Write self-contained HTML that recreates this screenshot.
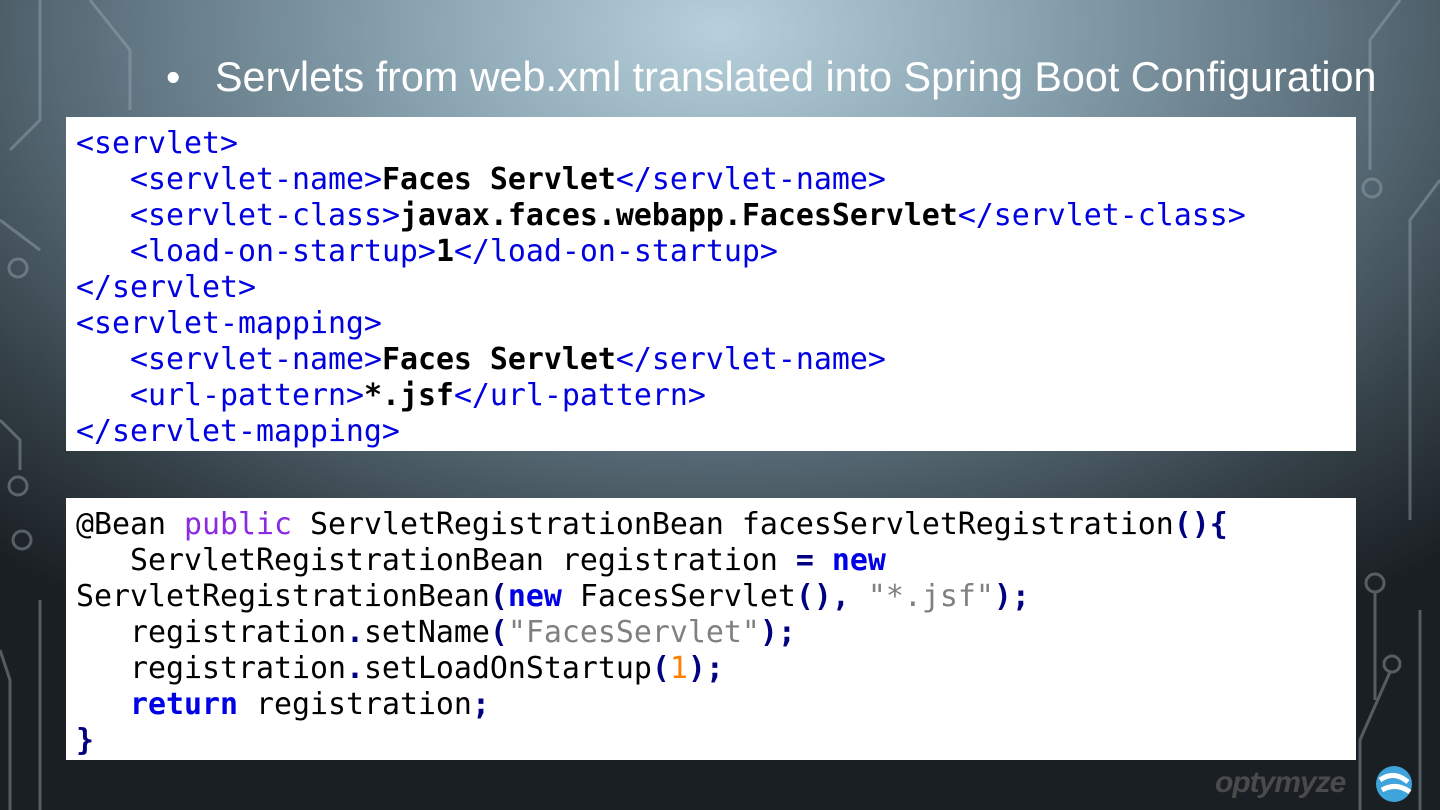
<!DOCTYPE html>
<html><head><meta charset="utf-8"><style>
html,body{margin:0;padding:0}
body{width:1440px;height:810px;overflow:hidden;position:relative;
background:radial-gradient(ellipse 1100px 700px at 720px 30px,#b7d0dc 0%,#8ea8b5 25%,#5f7480 55%,#323d44 82%,#1a1f23 100%);
font-family:"Liberation Sans",sans-serif}
.t{position:absolute;left:215px;top:54px;font-size:41.3px;color:#fff;white-space:nowrap}
.b{position:absolute;left:166px;top:54px;font-size:41px;color:#fff}
.box{position:absolute;left:66px;width:1290px;background:#fff;box-sizing:border-box;padding:9px 0 0 10px;
font-family:"DejaVu Sans Mono","Liberation Mono",monospace;font-size:29.9px;line-height:36px;white-space:pre;color:#000}
.k{color:#0000e0}.bd{font-weight:bold}
.p{color:#8a2be2}.o{color:#000080;font-weight:bold}.n{color:#0000e6;font-weight:bold}.s{color:#808080}.num{color:#ff8000}
.logo{position:absolute;left:1215px;top:766px;font-size:30px;font-weight:bold;font-style:italic;color:#4a4a4a;letter-spacing:-1px}
</style></head><body>
<svg width="1440" height="810" style="position:absolute;left:0;top:0" fill="none" stroke="#9aa9b2" stroke-width="3" opacity="0.45">
<path d="M90 0 L130 50 L130 110"/><path d="M40 0 L40 120 L10 150"/><path d="M0 220 L40 250"/><circle cx="18" cy="268" r="9"/>
<path d="M0 420 L20 440 L20 470"/><circle cx="18" cy="486" r="9"/><circle cx="22" cy="540" r="9"/>
<path d="M0 650 L10 680 L10 810"/><path d="M40 600 L40 810"/><path d="M1400 0 L1370 40 L1370 170"/><circle cx="1372" cy="188" r="9"/>
<path d="M1440 180 L1410 220 L1410 520"/><circle cx="1375" cy="583" r="9"/><path d="M1375 592 L1375 700"/>
<circle cx="1392" cy="664" r="8"/><path d="M1390 672 L1360 740 L1360 810"/><path d="M1420 610 L1420 810"/>
</svg>
<div class="b">•</div>
<div class="t">Servlets from web.xml translated into Spring Boot Configuration</div>
<div class="box" style="top:117px;height:334px"><span class="k">&lt;servlet&gt;</span>
   <span class="k">&lt;servlet-name&gt;</span><span class="bd">Faces Servlet</span><span class="k">&lt;/servlet-name&gt;</span>
   <span class="k">&lt;servlet-class&gt;</span><span class="bd">javax.faces.webapp.FacesServlet</span><span class="k">&lt;/servlet-class&gt;</span>
   <span class="k">&lt;load-on-startup&gt;</span><span class="bd">1</span><span class="k">&lt;/load-on-startup&gt;</span>
<span class="k">&lt;/servlet&gt;</span>
<span class="k">&lt;servlet-mapping&gt;</span>
   <span class="k">&lt;servlet-name&gt;</span><span class="bd">Faces Servlet</span><span class="k">&lt;/servlet-name&gt;</span>
   <span class="k">&lt;url-pattern&gt;</span><span class="bd">*.jsf</span><span class="k">&lt;/url-pattern&gt;</span>
<span class="k">&lt;/servlet-mapping&gt;</span></div>
<div class="box" style="top:498px;height:262px">@Bean <span class="p">public</span> ServletRegistrationBean facesServletRegistration<span class="o">(){</span>
   ServletRegistrationBean registration <span class="o">=</span> <span class="n">new</span>
ServletRegistrationBean<span class="o">(</span><span class="n">new</span> FacesServlet<span class="o">(),</span> <span class="s">"*.jsf"</span><span class="o">);</span>
   registration<span class="o">.</span>setName<span class="o">(</span><span class="s">"FacesServlet"</span><span class="o">);</span>
   registration<span class="o">.</span>setLoadOnStartup<span class="o">(</span><span class="num">1</span><span class="o">);</span>
   <span class="n">return</span> registration<span class="o">;</span>
<span class="o">}</span></div>
<div class="logo">optymyze</div>
<svg width="44" height="44" style="position:absolute;left:1374px;top:762px"><circle cx="20" cy="22" r="18" fill="#3fa3dc"/><path d="M6 18 Q20 8 34 20 M8 28 Q22 20 36 30" stroke="#fff" stroke-width="5" fill="none"/></svg>
</body></html>
